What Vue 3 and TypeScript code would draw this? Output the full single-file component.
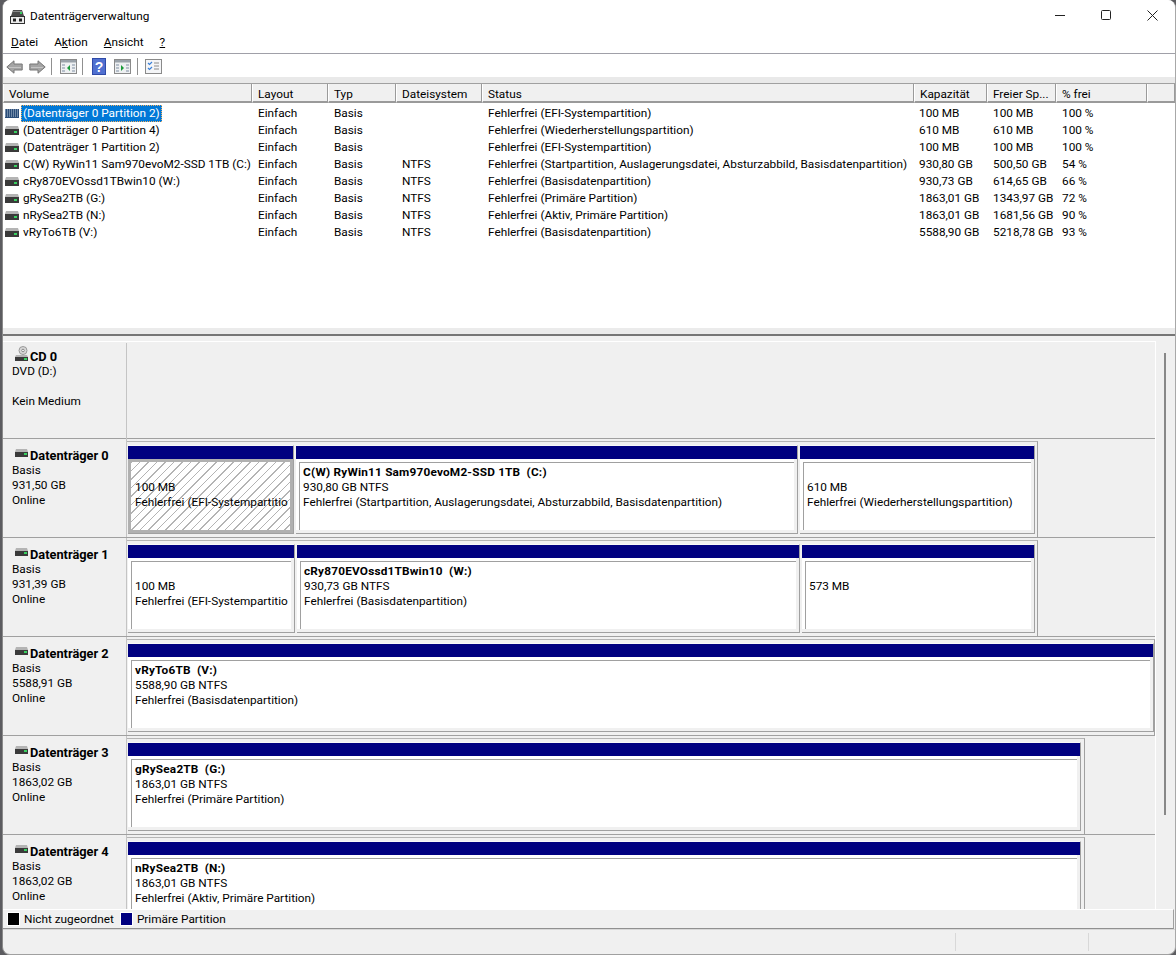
<script setup lang="ts">
interface Row { vol: string; fs: string; status: string; cap: string; free: string; pct: string; kind?: string }
const rows: Row[] = [
  { vol: '(Datenträger 0 Partition 2)', fs: '', status: 'Fehlerfrei (EFI-Systempartition)', cap: '100 MB', free: '100 MB', pct: '100 %', kind: 'sel' },
  { vol: '(Datenträger 0 Partition 4)', fs: '', status: 'Fehlerfrei (Wiederherstellungspartition)', cap: '610 MB', free: '610 MB', pct: '100 %' },
  { vol: '(Datenträger 1 Partition 2)', fs: '', status: 'Fehlerfrei (EFI-Systempartition)', cap: '100 MB', free: '100 MB', pct: '100 %' },
  { vol: 'C(W) RyWin11 Sam970evoM2-SSD 1TB (C:)', fs: 'NTFS', status: 'Fehlerfrei (Startpartition, Auslagerungsdatei, Absturzabbild, Basisdatenpartition)', cap: '930,80 GB', free: '500,50 GB', pct: '54 %' },
  { vol: 'cRy870EVOssd1TBwin10 (W:)', fs: 'NTFS', status: 'Fehlerfrei (Basisdatenpartition)', cap: '930,73 GB', free: '614,65 GB', pct: '66 %' },
  { vol: 'gRySea2TB (G:)', fs: 'NTFS', status: 'Fehlerfrei (Primäre Partition)', cap: '1863,01 GB', free: '1343,97 GB', pct: '72 %' },
  { vol: 'nRySea2TB (N:)', fs: 'NTFS', status: 'Fehlerfrei (Aktiv, Primäre Partition)', cap: '1863,01 GB', free: '1681,56 GB', pct: '90 %' },
  { vol: 'vRyTo6TB (V:)', fs: 'NTFS', status: 'Fehlerfrei (Basisdatenpartition)', cap: '5588,90 GB', free: '5218,78 GB', pct: '93 %' },
]
const heads = ['Volume', 'Layout', 'Typ', 'Dateisystem', 'Status', 'Kapazität', 'Freier Sp...', '% frei', '']
interface Part { w: number; name?: string; size: string; state: string; hatch?: boolean }
interface Disk { title: string; size: string; frame: number; parts: Part[] }
const disks: Disk[] = [
  { title: 'Datenträger 0', size: '931,50 GB', frame: 911, parts: [
    { w: 166, size: '100 MB', state: 'Fehlerfrei (EFI-Systempartitio', hatch: true },
    { w: 502, name: 'C(W) RyWin11 Sam970evoM2-SSD 1TB  (C:)', size: '930,80 GB NTFS', state: 'Fehlerfrei (Startpartition, Auslagerungsdatei, Absturzabbild, Basisdatenpartition)' },
    { w: 235, size: '610 MB', state: 'Fehlerfrei (Wiederherstellungspartition)' },
  ] },
  { title: 'Datenträger 1', size: '931,39 GB', frame: 911, parts: [
    { w: 167, size: '100 MB', state: 'Fehlerfrei (EFI-Systempartitio' },
    { w: 503, name: 'cRy870EVOssd1TBwin10  (W:)', size: '930,73 GB NTFS', state: 'Fehlerfrei (Basisdatenpartition)' },
    { w: 233, size: '573 MB', state: '' },
  ] },
  { title: 'Datenträger 2', size: '5588,91 GB', frame: 1028, parts: [
    { w: 1026, name: 'vRyTo6TB  (V:)', size: '5588,90 GB NTFS', state: 'Fehlerfrei (Basisdatenpartition)' },
  ] },
  { title: 'Datenträger 3', size: '1863,02 GB', frame: 958, parts: [
    { w: 953, name: 'gRySea2TB  (G:)', size: '1863,01 GB NTFS', state: 'Fehlerfrei (Primäre Partition)' },
  ] },
  { title: 'Datenträger 4', size: '1863,02 GB', frame: 958, parts: [
    { w: 953, name: 'nRySea2TB  (N:)', size: '1863,01 GB NTFS', state: 'Fehlerfrei (Aktiv, Primäre Partition)' },
  ] },
]
</script>

<template>
  <div class="desk">
    <div class="win">
      <header class="title">
        <svg class="appicon" width="15" height="15" viewBox="0 0 15 15">
          <path d="M3 1h9l2 6H1z" fill="#4a4a4a" />
          <rect x="3" y="2" width="9" height="1" fill="#8a8a8a" />
          <rect x="10" y="3" width="2" height="2" fill="#35d060" />
          <rect x=".5" y="7.500" width="14" height="7" fill="#ececec" stroke="#303030" />
          <rect x="3" y="9.500" width="3" height="3" fill="#222" />
          <rect x="9" y="9.500" width="3" height="3" fill="#222" />
        </svg>
        <span class="apptitle">Datenträgerverwaltung</span>
        <div class="ctrls">
          <span class="ctrl"><svg width="11" height="11" viewBox="0 0 11 11"><path d="M0 5.500h10" stroke="#222" /></svg></span>
          <span class="ctrl"><svg width="11" height="11" viewBox="0 0 11 11"><rect x=".5" y=".5" width="9" height="9" rx="1" fill="none" stroke="#222" /></svg></span>
          <span class="ctrl"><svg width="11" height="11" viewBox="0 0 11 11"><path d="M.5.5l10 10M10.500.5l-10 10" stroke="#222" /></svg></span>
        </div>
      </header>
      <nav class="menu">
        <span><u>D</u>atei</span>
        <span>A<u>k</u>tion</span>
        <span><u>A</u>nsicht</span>
        <span><u>?</u></span>
      </nav>
      <div class="tools">
        <svg width="17" height="14" viewBox="0 0 17 14"><path d="M.8 7L8 .8V4h8.200v6H8v3.200z" fill="#a4a4a4" stroke="#777" /><path d="M3 7.500h12" stroke="#c4c4c4" /></svg>
        <svg class="t2" width="17" height="14" viewBox="0 0 17 14"><path d="M16.200 7L9 .8V4H.8v6H9v3.200z" fill="#a4a4a4" stroke="#777" /><path d="M2 7.500h12" stroke="#c4c4c4" /></svg>
        <i class="sep s1"></i>
        <svg class="t3" width="17" height="15" viewBox="0 0 17 15"><rect x=".5" y=".5" width="16" height="14" fill="#eef0f2" stroke="#8a8a8a" /><rect x="1" y="1" width="15" height="2.500" fill="#9aa2aa" /><path d="M2 6h3M2 9h3M2 12h3M12 6h3M12 9h3M12 12h3" stroke="#7f8ea2" /><path d="M10 6v6L7 9z" fill="#1a9a3a" /></svg>
        <i class="sep s2"></i>
        <svg class="t4" width="14" height="17" viewBox="0 0 14 17"><rect width="14" height="17" fill="#2f4aa8" /><rect x="1" y="1" width="12" height="15" fill="#5070d0" /><text x="7" y="13.500" text-anchor="middle" fill="#fff" font-size="14" font-weight="700" font-family="Liberation Sans">?</text></svg>
        <svg class="t5" width="17" height="15" viewBox="0 0 17 15"><rect x=".5" y=".5" width="16" height="14" fill="#eef0f2" stroke="#8a8a8a" /><rect x="1" y="1" width="15" height="2.500" fill="#9aa2aa" /><path d="M2 6h3M2 9h3M2 12h3M12 6h3M12 9h3M12 12h3" stroke="#7f8ea2" /><path d="M7 6v6l3-3z" fill="#1a9a3a" /></svg>
        <i class="sep s3"></i>
        <svg class="t6" width="17" height="15" viewBox="0 0 17 15"><rect x=".5" y=".5" width="16" height="14" fill="#f4f5f7" stroke="#8a8a8a" /><path d="M3 4l1.500 1.500L7 3M3 9l1.500 1.500L7 8" fill="none" stroke="#3a80d8" stroke-width="1.200" /><path d="M9 4h5M9 7h5M9 10h5" stroke="#8a8a8a" /></svg>
      </div>
      <div class="band"></div>

      <section class="list">
        <div class="grid head">
          <div v-for="h in heads" :key="h" class="hcell">{{ h }}</div>
        </div>
        <div class="body">
          <div v-for="r in rows" :key="r.vol" class="grid row">
            <div class="vol">
              <svg class="dk" width="14" height="9" viewBox="0 0 14 9">
                <template v-if="r.kind === 'sel'">
                  <rect width="14" height="9" fill="#2a4c78" />
                  <path d="M0 1h14M0 3h14M0 5h14M0 7h14" stroke="#b8c8d8" stroke-dasharray="1 1" />
                </template>
                <template v-else>
                  <path d="M1 0h12l1 3H0z" fill="#b4b4b4" />
                  <rect y="3" width="14" height="6" fill="#3a3a3a" />
                  <rect x="9" y="5" width="3" height="2" fill="#38d060" />
                </template>
              </svg>
              <span :class="{ sel: r.kind === 'sel' }">{{ r.vol }}</span>
            </div>
            <div>Einfach</div>
            <div>Basis</div>
            <div>{{ r.fs }}</div>
            <div>{{ r.status }}</div>
            <div class="capcell">{{ r.cap }}</div>
            <div>{{ r.free }}</div>
            <div>{{ r.pct }}</div>
            <div></div>
          </div>
        </div>
      </section>
      <div class="split"></div>

      <section class="graph">
        <div class="pane">
          <div class="cd">
            <div class="label">
              <div class="ltitle">
                <svg class="cdicon" width="13" height="15" viewBox="0 0 13 15">
                  <circle cx="8" cy="4.500" r="4" fill="#d8d8d8" stroke="#9a9a9a" />
                  <circle cx="8" cy="4.500" r="1.300" fill="#fff" stroke="#888" />
                  <path d="M1 9h11l1 2H0z" fill="#b4b4b4" />
                  <rect y="11" width="13" height="4" fill="#3a3a3a" />
                  <rect x="9" y="12" width="3" height="2" fill="#38d060" />
                </svg>
                <b>CD 0</b>
              </div>
              <div>DVD (D:)</div>
              <div>&nbsp;</div>
              <div>Kein Medium</div>
            </div>
          </div>
          <div v-for="d in disks" :key="d.title" class="disk">
            <div class="label">
              <div class="ltitle">
                <svg class="dk2" width="13" height="8" viewBox="0 0 13 8">
                  <path d="M1 0h11l1 3H0z" fill="#b4b4b4" />
                  <rect y="3" width="13" height="5" fill="#3a3a3a" />
                  <rect x="9" y="4" width="3" height="2" fill="#38d060" />
                </svg>
                <b>{{ d.title }}</b>
              </div>
              <div>Basis</div>
              <div>{{ d.size }}</div>
              <div>Online</div>
            </div>
            <div class="frame" :style="{ width: d.frame + 'px' }">
              <div class="parts">
                <div v-for="p in d.parts" :key="p.size + p.w" class="part" :style="{ width: p.w + 'px' }">
                  <div class="bar"></div>
                  <div class="pbody" :class="{ hatch: p.hatch }">
                    <div class="inner">
                      <b class="pname">{{ p.name || '\u00a0' }}</b>
                      <div>{{ p.size }}</div>
                      <div>{{ p.state }}</div>
                    </div>
                  </div>
                </div>
              </div>
            </div>
          </div>
        </div>
        <div class="scroll"><div class="thumb"></div></div>
      </section>

      <footer class="legend">
        <i class="sw black"></i><span class="lt1">Nicht zugeordnet</span>
        <i class="sw navy"></i><span>Primäre Partition</span>
      </footer>
      <div class="status">
        <i class="cellA"></i><i class="cellB"></i>
      </div>
    </div>
  </div>
</template>

<style>
html, body { margin: 0; background: #5c5c60; }
</style>

<style scoped>
.desk { width: 1176px; height: 955px; overflow: hidden; font: 11.8px/15px Roboto, sans-serif; color: #000; }
.win {
  margin: 0 0 0 2px; width: 1174px; height: 955px; box-sizing: border-box; background: #f0f0f0;
  border-left: 1px solid #8a8a8a; border-right: 1px solid #a8a8a8; border-bottom: 1px solid #a0a0a0;
  border-radius: 8px; display: flex; flex-direction: column; overflow: hidden;
}
.title { height: 30px; box-sizing: border-box; padding-top: 2px; background: #fff; display: flex; align-items: center; flex: none; }
.appicon { margin-left: 7px; }
.apptitle { margin-left: 5px; }
.ctrls { margin-left: auto; display: flex; margin-top: -2px; }
.ctrl { width: 46px; height: 30px; display: flex; align-items: center; justify-content: center; }
.menu { height: 23px; box-sizing: content-box; background: #fff; flex: none; border-bottom: 1px solid #a0a0a8; display: flex; align-items: center; padding-left: 8px; gap: 16px; }
.menu span { padding-top: 1px; }
.tools { height: 23px; box-sizing: border-box; padding: 2px 0 0 3px; background: #fff; flex: none; display: flex; align-items: center; }
.t2 { margin-left: 6px; }
.sep { width: 1px; height: 17px; background: #909090; display: block; }
.s1 { margin-left: 5px; }
.t3 { margin-left: 8px; }
.s2 { margin-left: 5px; }
.t4 { margin-left: 9px; }
.t5 { margin-left: 8px; }
.s3 { margin-left: 6px; }
.t6 { margin-left: 7px; }
.band { height: 6px; flex: none; background: #e9e9e9; }
.list { height: 244px; flex: none; background: #fff; overflow: hidden; border-top: 1px solid #a0a0a0; box-sizing: content-box; }
.grid { display: grid; grid-template-columns: 249px 76px 68px 86px 432px 73px 69px 91px 1fr; }
.head { height: 19px; }
.hcell { box-sizing: border-box; height: 19px; padding: 1px 0 0 5px; line-height: 18px; background: #f0f0f0; border-left: 1px solid #fff; border-right: 1px solid #9a9a9a; border-bottom: 2px solid #9a9a9a; white-space: nowrap; overflow: hidden; }
.body { padding-top: 2px; }
.row { height: 17px; line-height: 17px; }
.row > div { padding-left: 6px; white-space: nowrap; overflow: hidden; }
.row > div.vol { padding-left: 2px; display: flex; align-items: center; }
.row > div.capcell { padding-left: 5px; }
.dk { flex: none; margin-right: 2px; }
.vol span { padding: 0 2px; line-height: 17px; }
.vol .sel { background: #0078d7; color: #fff; outline: 1px dotted #f5b060; outline-offset: -1px; }
.split { height: 13px; flex: none; box-sizing: border-box; background: #f0f0f0; border-top: 6px solid #ebebeb; }
.split::before { content: ""; display: block; height: 2px; background: #767676; }
.graph { flex: none; height: 568px; display: flex; background: #f0f0f0; overflow: hidden; }
.pane { width: 1152px; flex: none; overflow: hidden; }
.scroll { flex: 1; border-left: 1px solid #fff; padding: 12px 0 0 8px; }
.thumb { width: 2px; height: 462px; background: #888; }
.cd { height: 98px; box-sizing: border-box; padding-top: 1px; border-bottom: 1px solid #a0a0a0; border-top: 1px solid #fff; }
.cd .label { height: 96px; padding-top: 6px; }
.disk { height: 99px; box-sizing: border-box; border-bottom: 1px solid #a0a0a0; display: flex; }
.label { box-sizing: border-box; width: 124px; flex: none; padding: 9px 0 0 9px; border-right: 1px solid #c4c4c4; }
.ltitle { margin-left: 3px; display: flex; align-items: center; height: 15px; }
.ltitle b { white-space: nowrap; margin-left: 2px; font-size: 12.8px; }
.dk2 { margin-top: -5px; }
.cdicon { margin-top: -7px; }
.frame { box-sizing: border-box; margin-top: 2px; padding: 3px 0 0 1px; border-top: 1px solid #b4b4b4; border-right: 1px solid #a0a0a0; height: 96px; flex: none; }
.parts { display: flex; height: 89px; gap: 2px; }
.part { box-sizing: border-box; display: flex; flex-direction: column; border-right: 1px solid #a0a0a0; border-bottom: 1px solid #a0a0a0; border-top: 1px solid #f8f8f8; flex: none; }
.bar { height: 13px; background: #000080; flex: none; }
.pbody { flex: 1; background: #fff; box-sizing: border-box; padding: 3px 0 0 3px; border-right: 3px solid #f0f0f0; border-bottom: 3px solid #f0f0f0; min-height: 0; }
.inner { height: 100%; box-sizing: border-box; padding: 2px 0 0 3px; border-top: 1px solid #a0a0a0; border-left: 1px solid #a0a0a0; white-space: nowrap; overflow: hidden; }
.pname { display: block; height: 15px; white-space: pre; letter-spacing: .2px; }
.pbody.hatch { background: #fff; padding: 0; border: 3px solid #b0b0b0; }
.hatch .inner { border: 0; padding-left: 4px; padding-top: 3px; background: repeating-linear-gradient(135deg, #b4b4b4 0 1px, #fff 1px 6px); }
.legend { height: 20px; flex: none; box-sizing: border-box; display: flex; align-items: center; padding-left: 5px; background: #f0f0f0; border-top: 1px solid #fff; border-bottom: 1px solid #909090; border-right: 1px solid #a0a0a0; margin-right: 1px; }
.sw { width: 11px; height: 12px; display: block; margin-right: 5px; outline: 1px solid #fff; }
.black { background: #000; }
.navy { background: #000080; }
.lt1 { margin-right: 7px; }
.status { flex: 1; border-top: 1px solid #d8d8d8; display: flex; justify-content: flex-end; padding-top: 3px; }
.status i { display: block; width: 1px; height: 18px; background: #d8d8d8; }
.cellA { margin-right: 132px; }
.cellB { margin-right: 86px; }
</style>
